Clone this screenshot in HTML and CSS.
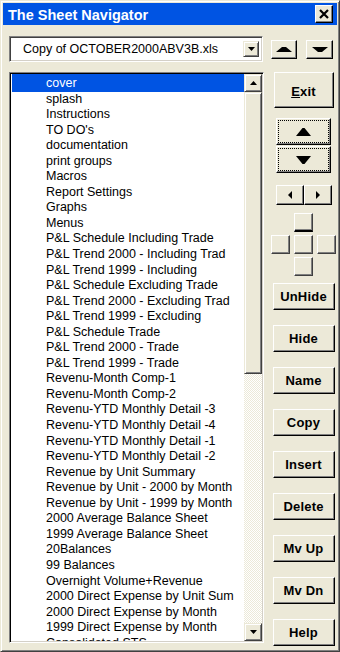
FILE: index.html
```html
<!DOCTYPE html>
<html>
<head>
<meta charset="utf-8">
<title>The Sheet Navigator</title>
<link rel="stylesheet" href="styles.css">
</head>
<body>
<div class="window">
  <div class="titlebar">
    <span class="title">The Sheet Navigator</span>
    <button class="btn close"><svg width="10" height="10" viewBox="0 0 10 10"><path d="M1 1L9 9M9 1L1 9" stroke="#000" stroke-width="2.2" fill="none"/></svg></button>
  </div>
  <div class="toprow">
    <div class="combo">
      <span class="combo-text">Copy of OCTOBER2000ABV3B.xls</span>
      <span class="sbtn combo-drop"><svg width="7" height="4" viewBox="0 0 7 4"><polygon points="0,0 7,0 3.5,4" fill="#000"/></svg></span>
    </div>
    <button class="btn tb-up"><svg width="16" height="5" viewBox="0 0 16 5"><polygon points="0,5 16,5 10,0 6,0" fill="#000"/></svg></button>
    <button class="btn tb-down"><svg width="16" height="5" viewBox="0 0 16 5"><polygon points="0,0 16,0 10,5 6,5" fill="#000"/></svg></button>
  </div>
  <div class="main">
    <div class="listbox">
      <ul class="items">
        <li class="sel">cover</li>
        <li>splash</li>
        <li>Instructions</li>
        <li>TO DO's</li>
        <li>documentation</li>
        <li>print groups</li>
        <li>Macros</li>
        <li>Report Settings</li>
        <li>Graphs</li>
        <li>Menus</li>
        <li>P&amp;L Schedule Including Trade</li>
        <li>P&amp;L Trend 2000 - Including Trad</li>
        <li>P&amp;L Trend 1999 - Including</li>
        <li>P&amp;L Schedule Excluding Trade</li>
        <li>P&amp;L Trend 2000 - Excluding Trad</li>
        <li>P&amp;L Trend 1999 - Excluding</li>
        <li>P&amp;L Schedule Trade</li>
        <li>P&amp;L Trend 2000 - Trade</li>
        <li>P&amp;L Trend 1999 - Trade</li>
        <li>Revenu-Month Comp-1</li>
        <li>Revenu-Month Comp-2</li>
        <li>Revenu-YTD Monthly Detail -3</li>
        <li>Revenu-YTD Monthly Detail -4</li>
        <li>Revenu-YTD Monthly Detail -1</li>
        <li>Revenu-YTD Monthly Detail -2</li>
        <li>Revenue by Unit Summary</li>
        <li>Revenue by Unit - 2000 by Month</li>
        <li>Revenue by Unit - 1999 by Month</li>
        <li>2000 Average Balance Sheet</li>
        <li>1999 Average Balance Sheet</li>
        <li>20Balances</li>
        <li>99 Balances</li>
        <li>Overnight Volume+Revenue</li>
        <li>2000 Direct Expense by Unit Sum</li>
        <li>2000 Direct Expense by Month</li>
        <li>1999 Direct Expense by Month</li>
        <li>Consolidated STS</li>
      </ul>
      <div class="scrollbar">
        <span class="sbtn sb-arrow"><svg width="7" height="4" viewBox="0 0 7 4"><polygon points="0,4 7,4 3.5,0" fill="#000"/></svg></span>
        <span class="sbtn thumb"></span>
        <span class="track"></span>
        <span class="sbtn sb-arrow"><svg width="7" height="4" viewBox="0 0 7 4"><polygon points="0,0 7,0 3.5,4" fill="#000"/></svg></span>
      </div>
    </div>
    <div class="side">
      <button class="btn tbtn exit"><u>E</u>xit</button>
      <button class="btn big up"><svg width="15" height="8" viewBox="0 0 15 8"><polygon points="0,8 15,8 8.5,0 6.5,0" fill="#000"/></svg></button>
      <button class="btn big down"><svg width="15" height="8" viewBox="0 0 15 8"><polygon points="0,0 15,0 8.5,8 6.5,8" fill="#000"/></svg></button>
      <div class="lr">
        <button class="btn lrbtn"><svg width="4" height="8" viewBox="0 0 4 8"><polygon points="4,0 4,8 0,4" fill="#000"/></svg></button>
        <button class="btn lrbtn"><svg width="4" height="8" viewBox="0 0 4 8"><polygon points="0,0 0,8 4,4" fill="#000"/></svg></button>
      </div>
      <div class="pad">
        <span class="cell c-top"></span>
        <span class="cell c-left"></span>
        <span class="cell c-mid"></span>
        <span class="cell c-right"></span>
        <span class="cell c-bottom"></span>
      </div>
      <button class="btn tbtn first">UnHide</button>
      <button class="btn tbtn">Hide</button>
      <button class="btn tbtn">Name</button>
      <button class="btn tbtn">Copy</button>
      <button class="btn tbtn">Insert</button>
      <button class="btn tbtn">Delete</button>
      <button class="btn tbtn">Mv Up</button>
      <button class="btn tbtn">Mv Dn</button>
      <button class="btn tbtn">Help</button>
    </div>
  </div>
</div>
</body>
</html>
```
FILE: styles.css
```css
* { box-sizing: border-box; }
html, body { margin: 0; padding: 0; }
body {
  width: 340px;
  height: 652px;
  background: #ece9d8;
  font-family: "Liberation Sans", Arial, sans-serif;
  color: #000;
}
.window {
  width: 340px;
  height: 652px;
  background: #ece9d8;
  border: 1px solid;
  border-color: #ece9d8 #404040 #404040 #ece9d8;
  box-shadow: inset 1px 1px #fff, inset -1px -1px #808080;
  padding: 2px;
  display: flex;
  flex-direction: column;
}
.titlebar {
  height: 22px;
  flex: none;
  background: #0054e3;
  display: flex;
  align-items: center;
  justify-content: space-between;
  padding: 0 4px 0 5px;
}
.title {
  color: #fff;
  font-weight: bold;
  font-size: 14.5px;
  padding-top: 1px;
  white-space: nowrap;
}
.btn {
  background: #ece9d8;
  border: 1px solid;
  border-color: #fff #000 #000 #fff;
  box-shadow: inset -1px -1px #808080;
  padding: 0;
  margin: 0;
  display: flex;
  align-items: center;
  justify-content: center;
  font-family: "Liberation Sans", Arial, sans-serif;
  color: #000;
}
.sbtn {
  background: #ece9d8;
  border: 1px solid;
  border-color: #ece9d8 #404040 #404040 #ece9d8;
  box-shadow: inset 1px 1px #fff, inset -1px -1px #808080;
  display: flex;
  align-items: center;
  justify-content: center;
  flex: none;
}
.close { width: 18px; height: 18px; }
.toprow {
  flex: none;
  display: flex;
  align-items: center;
  margin-top: 11px;
  padding-left: 6px;
  height: 26px;
}
.combo {
  width: 254px;
  height: 26px;
  background: #fff;
  border: 1px solid;
  border-color: #808080 #fff #fff #808080;
  box-shadow: inset 1px 1px #404040, inset -1px -1px #d4d0c8;
  display: flex;
  align-items: center;
  padding: 0 3px 0 13px;
}
.combo-text { font-size: 12.5px; white-space: nowrap; }
.combo-drop { width: 16px; height: 16px; margin-left: auto; }
.tb-up { width: 26px; height: 19px; margin-left: 8px; }
.tb-down { width: 27px; height: 19px; margin-left: 9px; }
.main {
  flex: none;
  display: flex;
  align-items: flex-start;
  gap: 8px;
  margin-top: 10px;
  padding-left: 6px;
}
.listbox {
  width: 255px;
  height: 571px;
  flex: none;
  background: #fff;
  border: 1px solid;
  border-color: #808080 #fff #fff #808080;
  box-shadow: inset 1px 1px #000, inset -1px -1px #d4d0c8;
  padding: 1px;
  display: flex;
}
.items {
  list-style: none;
  margin: 0;
  padding: 2px 0 0 0;
  flex: 1;
  min-width: 0;
  overflow: hidden;
}
.items li {
  height: 15.55px;
  line-height: 15.55px;
  font-size: 12.5px;
  padding-left: 34px;
  margin-left: 1px;
  white-space: nowrap;
}
.items li.sel {
  background: #0054e3;
  color: #fff;
  box-shadow: 0 -2px 0 #0054e3;
}
.scrollbar {
  width: 18px;
  flex: none;
  display: flex;
  flex-direction: column;
  background: repeating-conic-gradient(#fff 0 25%, #ece9d8 0 50%) 0 0 / 2px 2px;
}
.sb-arrow { height: 18px; }
.thumb { height: 282px; }
.track { flex: 1; }
.side {
  width: 63px;
  flex: none;
  display: flex;
  flex-direction: column;
  align-items: center;
}
.tbtn {
  width: 62px;
  height: 27px;
  font-weight: bold;
  font-size: 13px;
  letter-spacing: 0.2px;
  margin-top: 15px;
  flex: none;
}
.tbtn.exit { width: 60px; height: 36px; margin-top: 0; padding-top: 2px; }
.tbtn.first { margin-top: 7px; }
.big {
  width: 55px;
  height: 27px;
  outline: 1px dotted #000;
  outline-offset: -3px;
  flex: none;
}
.big.up { margin-top: 10px; }
.big.down { margin-top: 1px; }
.lr { display: flex; margin-top: 12px; }
.lrbtn { width: 28px; height: 20px; }
.pad {
  margin-top: 8px;
  display: grid;
  grid-template-columns: 19px 19px 19px;
  grid-template-rows: 19px 19px 19px;
  column-gap: 4px;
  row-gap: 3px;
}
.cell {
  background: #ece9d8;
  border: 1px solid;
  border-color: #fff #404040 #404040 #fff;
  box-shadow: inset -1px -1px #808080;
}
.c-top { grid-column: 2; grid-row: 1; border-bottom: 2px solid #000; }
.c-left { grid-column: 1; grid-row: 2; }
.c-mid { grid-column: 2; grid-row: 2; }
.c-right { grid-column: 3; grid-row: 2; }
.c-bottom { grid-column: 2; grid-row: 3; }
```
